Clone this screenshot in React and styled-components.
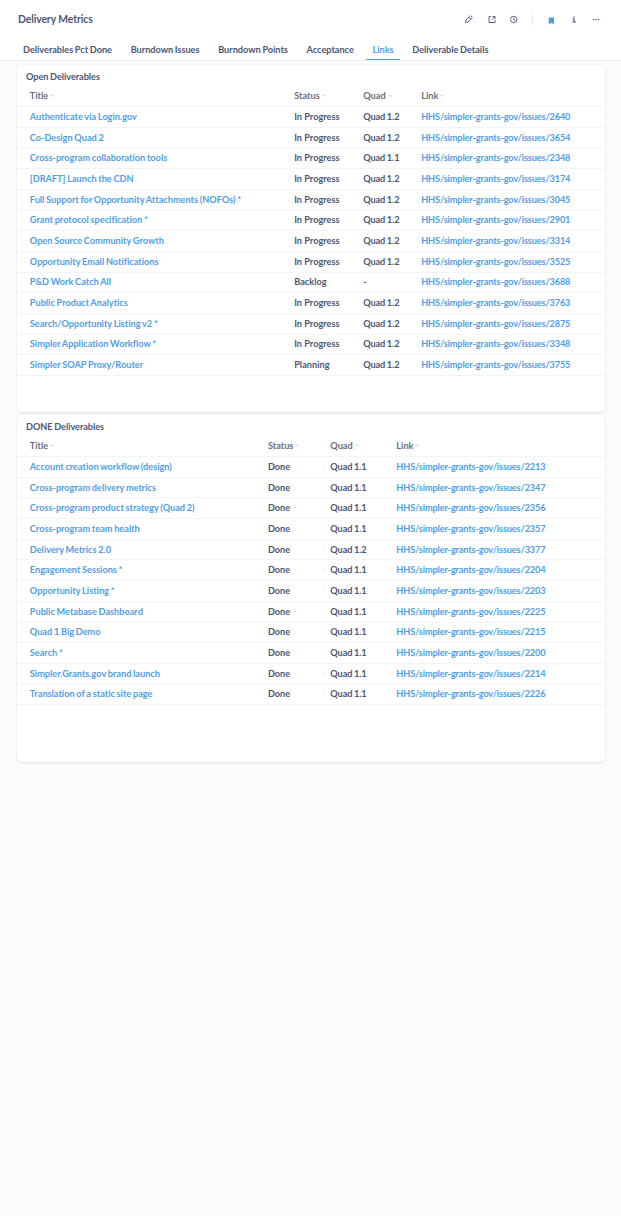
import React from "react";
import styled, { createGlobalStyle } from "styled-components";

const GlobalStyle = createGlobalStyle`
  * { box-sizing: border-box; }
  body {
    margin: 0;
    background: #f9fbfc;
    color: #4c5773;
    font-family: Lato, "Liberation Sans", sans-serif;
    font-size: 9.2px;
    font-weight: 700;
  }
`;

const Page = styled.div`
  min-height: 100vh;
  background: #f9fbfc;
`;

const Header = styled.header`
  height: 61px;
  background: #fff;
  border-bottom: 1px solid #e9eaed;
`;

const TitleBar = styled.div`
  height: 39px;
  padding: 0 20px 1px 18px;
  display: flex;
  align-items: center;
  justify-content: space-between;
`;

const PageTitle = styled.h1`
  margin: 0;
  font-size: 10.4px;
  line-height: 14px;
  letter-spacing: -0.1px;
`;

const Toolbar = styled.div`
  display: flex;
  align-items: center;
`;

const IconButton = styled.button`
  display: flex;
  padding: 0;
  border: 0;
  background: none;
  width: 9px;
  height: 9px;
  margin-right: ${(p) => p.$gap || 0}px;
  margin-top: ${(p) => p.$drop || 0}px;
  color: ${(p) => (p.$active ? "#509ee3" : "#5c6580")};
  svg { width: 9px; height: 9px; display: block; }
`;

const Divider = styled.span`
  width: 1px;
  height: 11px;
  margin-right: 14px;
  background: #e6e8ec;
`;

const Tabs = styled.nav`
  display: flex;
  height: 21px;
  padding-left: 17px;
  gap: 6.7px;
`;

const Tab = styled.a`
  height: 21px;
  padding: 0 6px;
  line-height: 21px;
  font-size: 9.2px;
  letter-spacing: -0.03px;
  word-spacing: -0.5px;
  white-space: nowrap;
  color: ${(p) => (p.$active ? "#509ee3" : "inherit")};
  border-bottom: 1px solid ${(p) => (p.$active ? "#509ee3" : "transparent")};
`;

const Cards = styled.main`
  padding: 4px 16.5px 0 17px;
  display: flex;
  flex-direction: column;
  gap: 3px;
`;

const Card = styled.section`
  height: 347px;
  background: #fff;
  border-radius: 5px;
  box-shadow: 0 0 0 0.6px #eceef0, 0 1px 2px rgba(0, 0, 0, 0.12);
`;

const CardTitle = styled.h2`
  margin: 0;
  padding: 5px 9px 0;
  height: 20px;
  font-size: 9.2px;
  line-height: 14px;
  letter-spacing: -0.06px;
  word-spacing: -0.5px;
`;

const Row = styled.div`
  display: grid;
  grid-template-columns: ${(p) => p.$columns};
  align-items: center;
  height: 20.7px;
  padding-left: 12.8px;
  border-bottom: 1px solid #f3f4f5;
  line-height: 14px;
  white-space: nowrap;
`;

const HeadRow = styled(Row)`
  height: 22px;
  color: #696e7b;
`;

const HeadCell = styled.span`
  display: flex;
  align-items: center;
  gap: 2px;
  svg { width: 4px; height: 3px; color: #bfc3cb; }
`;

const TitleLink = styled.a`
  color: #509ee3;
  letter-spacing: -0.01px;
  word-spacing: -0.5px;
`;

const IssueLink = styled.a`
  color: #509ee3;
  letter-spacing: -0.145px;
`;

const QuadCell = styled.span`
  letter-spacing: -0.1px;
  word-spacing: -0.5px;
`;

const Caret = () => (
  <svg viewBox="0 0 4 3" fill="none" stroke="currentColor" strokeWidth="0.8">
    <path d="M0.4 2.2 2 0.8 3.6 2.2" />
  </svg>
);

const PencilIcon = () => (
  <svg viewBox="0 0 18 18" fill="none" stroke="currentColor" strokeWidth="2" strokeLinejoin="round">
    <path d="M3 15l1-5 7.5-7.5a2 2 0 0 1 3 0l1 1a2 2 0 0 1 0 3L8 14zM10 4.5l3.5 3.5" />
  </svg>
);

const ShareIcon = () => (
  <svg viewBox="0 0 18 18" fill="none" stroke="currentColor" strokeWidth="2">
    <path d="M8 3H4v12h12v-5M11 3h5v5M16 3L9.5 9.5" />
  </svg>
);

const ClockIcon = () => (
  <svg viewBox="0 0 18 18" fill="none" stroke="currentColor" strokeWidth="2">
    <circle cx="9.5" cy="9" r="6.4" />
    <path d="M9.5 5v4.5l3 1.5" />
  </svg>
);

const BookmarkIcon = () => (
  <svg viewBox="0 0 18 18" fill="currentColor">
    <path d="M3.5 3h10.5v14l-3-2.5h-4.5l-3 2.5z" />
  </svg>
);

const InfoIcon = () => (
  <svg viewBox="0 0 18 18" fill="currentColor">
    <path d="M6.5 3h3v2.6h-3zM5 7.2h4.5v6H12V15H4.5v-1.8H7V9H5z" />
  </svg>
);

const MoreIcon = () => (
  <svg viewBox="0 0 18 18" fill="currentColor">
    <circle cx="3.5" cy="9" r="1.6" />
    <circle cx="8.5" cy="9" r="1.6" />
    <circle cx="13.5" cy="9" r="1.6" />
  </svg>
);

const TABS = [
  "Deliverables Pct Done",
  "Burndown Issues",
  "Burndown Points",
  "Acceptance",
  "Links",
  "Deliverable Details",
];

const OPEN = [
  ["Authenticate via Login.gov", "In Progress", "Quad 1.2", 2640],
  ["Co-Design Quad 2", "In Progress", "Quad 1.2", 3654],
  ["Cross-program collaboration tools", "In Progress", "Quad 1.1", 2348],
  ["[DRAFT] Launch the CDN", "In Progress", "Quad 1.2", 3174],
  ["Full Support for Opportunity Attachments (NOFOs) *", "In Progress", "Quad 1.2", 3045],
  ["Grant protocol specification *", "In Progress", "Quad 1.2", 2901],
  ["Open Source Community Growth", "In Progress", "Quad 1.2", 3314],
  ["Opportunity Email Notifications", "In Progress", "Quad 1.2", 3525],
  ["P&D Work Catch All", "Backlog", "-", 3688],
  ["Public Product Analytics", "In Progress", "Quad 1.2", 3763],
  ["Search/Opportunity Listing v2 *", "In Progress", "Quad 1.2", 2875],
  ["Simpler Application Workflow *", "In Progress", "Quad 1.2", 3348],
  ["Simpler SOAP Proxy/Router", "Planning", "Quad 1.2", 3755],
];

const DONE = [
  ["Account creation workflow (design)", "Done", "Quad 1.1", 2213],
  ["Cross-program delivery metrics", "Done", "Quad 1.1", 2347],
  ["Cross-program product strategy (Quad 2)", "Done", "Quad 1.1", 2356],
  ["Cross-program team health", "Done", "Quad 1.1", 2357],
  ["Delivery Metrics 2.0", "Done", "Quad 1.2", 3377],
  ["Engagement Sessions *", "Done", "Quad 1.1", 2204],
  ["Opportunity Listing *", "Done", "Quad 1.1", 2203],
  ["Public Metabase Dashboard", "Done", "Quad 1.1", 2225],
  ["Quad 1 Big Demo", "Done", "Quad 1.1", 2215],
  ["Search *", "Done", "Quad 1.1", 2200],
  ["Simpler.Grants.gov brand launch", "Done", "Quad 1.1", 2214],
  ["Translation of a static site page", "Done", "Quad 1.1", 2226],
];

function TableCard({ title, rows, columns }) {
  return (
    <Card>
      <CardTitle>{title}</CardTitle>
      <HeadRow $columns={columns}>
        {["Title", "Status", "Quad", "Link"].map((name) => (
          <HeadCell key={name}>
            {name}
            <Caret />
          </HeadCell>
        ))}
      </HeadRow>
      {rows.map(([name, status, quad, issue]) => (
        <Row key={issue} $columns={columns}>
          <TitleLink>{name}</TitleLink>
          <span>{status}</span>
          <QuadCell>{quad}</QuadCell>
          <IssueLink>{`HHS/simpler-grants-gov/issues/${issue}`}</IssueLink>
        </Row>
      ))}
    </Card>
  );
}

export default function App() {
  return (
    <Page>
      <GlobalStyle />
      <Header>
        <TitleBar>
          <PageTitle>Delivery Metrics</PageTitle>
          <Toolbar>
            <IconButton aria-label="Edit" $gap={14}><PencilIcon /></IconButton>
            <IconButton aria-label="Share" $gap={13}><ShareIcon /></IconButton>
            <IconButton aria-label="History" $gap={14}><ClockIcon /></IconButton>
            <Divider />
            <IconButton aria-label="Bookmark" $gap={14} $drop={3} $active><BookmarkIcon /></IconButton>
            <IconButton aria-label="Info" $gap={13}><InfoIcon /></IconButton>
            <IconButton aria-label="More"><MoreIcon /></IconButton>
          </Toolbar>
        </TitleBar>
        <Tabs>
          {TABS.map((tab) => (
            <Tab key={tab} $active={tab === "Links"}>{tab}</Tab>
          ))}
        </Tabs>
      </Header>
      <Cards>
        <TableCard title="Open Deliverables" rows={OPEN} columns="264.4px 69px 58px 1fr" />
        <TableCard title="DONE Deliverables" rows={DONE} columns="238.1px 62.4px 66px 1fr" />
      </Cards>
    </Page>
  );
}
